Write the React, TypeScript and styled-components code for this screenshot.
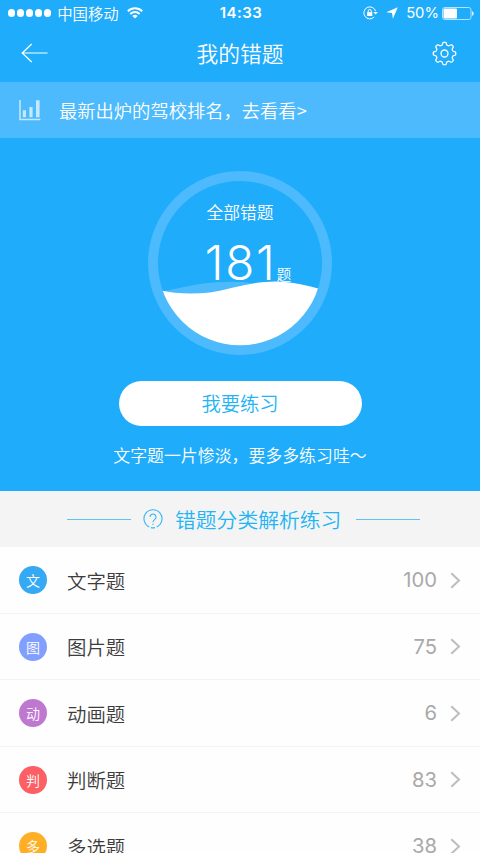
import React from 'react';
import styled, { createGlobalStyle } from 'styled-components';

const Global = createGlobalStyle`
  * { box-sizing: border-box; }
  html, body { margin: 0; padding: 0; height: 853px; overflow: hidden; background: #fff; }
  svg { display: block; flex: none; }
`;

const cjk = `'Noto Sans CJK SC', sans-serif`;
const latin = `Inter, 'Noto Sans CJK SC', sans-serif`;

const Screen = styled.div`
  width: 480px;
  height: 853px;
  overflow: hidden;
  background: #fefefe;
  font-family: ${cjk};
  font-weight: 350;
  display: flex;
  flex-direction: column;
  white-space: nowrap;
`;

const Hero = styled.div`
  flex: none;
  height: 491px;
  background: #1facfb;
  color: #fff;
  display: flex;
  flex-direction: column;
`;

const StatusBar = styled.div`
  height: 26px;
  padding: 0 6px 0 8px;
  display: grid;
  grid-template-columns: 1fr auto 1fr;
  align-items: center;
`;

const StatusSide = styled.div<{ $end?: boolean }>`
  display: flex;
  align-items: center;
  justify-content: ${(p) => (p.$end ? 'flex-end' : 'flex-start')};
`;

const Dots = styled.div`
  display: flex;
  gap: 1.8px;
`;

const Dot = styled.i`
  width: 7.2px;
  height: 7.2px;
  border-radius: 50%;
  background: #fff;
`;

const Carrier = styled.span`
  font-size: 15.4px;
  line-height: 26px;
  margin: 0 8px 0 6px;
`;

const Clock = styled.span`
  font: 600 15px/26px ${latin};
  letter-spacing: 0.5px;
`;

const Percent = styled.span`
  font: 400 14.8px/26px ${latin};
  margin: 0 3px 0 8px;
`;

const Spacer = styled.i`
  width: 8px;
`;

const NavBar = styled.div`
  height: 56px;
  padding: 0 23px 2px 21px;
  display: flex;
  align-items: center;
  justify-content: space-between;
`;

const NavTitle = styled.h1`
  margin: 0;
  font-size: 21.8px;
  font-weight: 350;
  line-height: 54px;
`;

const Banner = styled.div`
  height: 56px;
  padding-left: 19px;
  background: #4cbafc;
  display: flex;
  align-items: center;
  gap: 18px;
  font-size: 18.3px;
`;

const Gauge = styled.div`
  width: 184px;
  height: 184px;
  margin: 33.4px auto 0;
  display: grid;
  > * { grid-area: 1 / 1; }
`;

const GaugeText = styled.div`
  z-index: 1;
  display: flex;
  flex-direction: column;
  align-items: center;
`;

const GaugeLabel = styled.div`
  margin-top: 28.6px;
  font-size: 16.8px;
  line-height: 24px;
`;

const GaugeValue = styled.div`
  display: flex;
  align-items: baseline;
  margin: 11px 0 0 16px;
  font: 350 47.5px/56px ${latin};
  letter-spacing: 1.8px;
`;

const Unit = styled.span`
  font: 350 14.8px/20px ${cjk};
  letter-spacing: 0;
  margin-left: 0;
`;

const PracticeButton = styled.button`
  width: 243px;
  height: 45px;
  margin: 25.6px auto 0;
  padding: 0;
  border: 0;
  border-radius: 23px;
  background: #fff;
  color: #22b4f5;
  font: 350 19.3px/45px ${cjk};
`;

const Hint = styled.div`
  margin-top: 17px;
  text-align: center;
  font-size: 16.9px;
  line-height: 24px;
`;

const SectionHead = styled.div`
  flex: none;
  height: 56px;
  background: #f4f4f4;
  color: #22b4f5;
  display: flex;
  align-items: center;
  padding-left: 66.5px;
  font-size: 20.8px;
`;

const Rule = styled.i`
  width: 64px;
  height: 1px;
  background: #5cc3f2;
`;

const HelpSlot = styled.span`
  margin-left: 12.5px;
`;

const SectionTitle = styled.span`
  margin: 0 15px 0 12px;
  line-height: 54px;
  padding-bottom: 1px;
`;

const Row = styled.div`
  flex: none;
  height: 66.5px;
  padding: 1px 19px 0;
  border-bottom: 1px solid #f3f3f3;
  display: flex;
  align-items: center;
`;

const Badge = styled.span<{ $color: string }>`
  width: 28px;
  height: 28px;
  border-radius: 50%;
  background: ${(p) => p.$color};
  color: #fff;
  font-size: 14px;
  line-height: 28px;
  text-align: center;
`;

const RowLabel = styled.span`
  flex: 1;
  margin-left: 20px;
  color: #3c3c3c;
  font-size: 19.4px;
`;

const Count = styled.span`
  margin-right: 13px;
  color: #a9a9a9;
  font: 370 20.2px/28px ${latin};
`;

const rows = [
  { mark: '文', label: '文字题', count: 100, color: '#36a9f5' },
  { mark: '图', label: '图片题', count: 75, color: '#829fff' },
  { mark: '动', label: '动画题', count: 6, color: '#bf78d0' },
  { mark: '判', label: '判断题', count: 83, color: '#fc6064' },
  { mark: '多', label: '多选题', count: 38, color: '#ffaf26' },
];

const gearPath = (() => {
  const c = 12.5;
  const steps = 160;
  const points: string[] = [];
  for (let i = 0; i < steps; i++) {
    const a = (i / steps) * Math.PI * 2;
    const r = 9.95 + 1.3 * Math.tanh(2.4 * Math.cos(8 * a));
    points.push(`${(c + r * Math.cos(a)).toFixed(2)} ${(c + r * Math.sin(a)).toFixed(2)}`);
  }
  return `M${points.join('L')}Z`;
})();

const Wifi = () => (
  <svg width="16" height="12" viewBox="0 0 16 12" fill="none" stroke="#fff" strokeWidth="1.9">
    <path d="M.8 4.2a10.3 10.3 0 0 1 14.4 0" />
    <path d="M3.3 7a6.7 6.7 0 0 1 9.4 0" />
    <path d="M8 11.6 5.4 9a3.7 3.7 0 0 1 5.2 0Z" fill="#fff" stroke="none" />
  </svg>
);

const RotationLock = () => (
  <svg width="15" height="14" viewBox="0 0 15 14" fill="none" stroke="#fff" strokeWidth="1">
    <path d="M12.6 5.2A6 6 0 1 0 11.2 11" />
    <path d="M10.4 6h4.4l-2.2 2.6Z" fill="#fff" stroke="none" />
    <rect x="4.1" y="6.2" width="5.2" height="3.8" fill="#fff" stroke="none" />
    <path d="M5.2 6.4V5a1.5 1.5 0 0 1 3 0v1.4" />
  </svg>
);

const Location = () => (
  <svg width="12" height="12" viewBox="0 0 12 12" fill="#fff">
    <path d="M11.8.2 6.9 11.8 6 6 .2 5.2Z" />
  </svg>
);

const Battery = () => (
  <svg width="32" height="13" viewBox="0 0 32 13">
    <rect x=".5" y=".5" width="28.5" height="12" rx="2.2" fill="none" stroke="#b5e2fd" />
    <rect x="1.5" y="1.5" width="13.5" height="10" rx="1" fill="#fff" />
    <path d="M30 4.2c2.4.6 2.4 4 0 4.6Z" fill="#d5effd" />
  </svg>
);

const BackArrow = () => (
  <svg width="27" height="20" viewBox="0 0 27 20" fill="none" stroke="#fff" strokeWidth="1.2">
    <path d="M10.7 1 1.2 10l9.5 9M1.2 10H26.5" />
  </svg>
);

const Gear = () => (
  <svg width="25" height="25" viewBox="0 0 25 25" fill="none" stroke="#fff" strokeWidth="1.3">
    <path d={gearPath} />
    <circle cx="12.5" cy="12.5" r="3.5" />
  </svg>
);

const Bars = () => (
  <svg width="22" height="21" viewBox="0 0 22 21" fill="#c4e8fe">
    <path d="M.2 0h1.6v18.8h19.6v1.5H.2Z" />
    <path d="M3.8 10.3h3.2v7H3.8ZM10.4 7h3.2v10.3h-3.2ZM17 .3h3.6v17H17Z" />
  </svg>
);

const Waves = () => (
  <svg width="184" height="184" viewBox="0 0 184 184">
    <defs>
      <clipPath id="inner"><circle cx="92" cy="92.3" r="82" /></clipPath>
    </defs>
    <circle cx="92" cy="92" r="87" fill="none" stroke="#4cbafc" strokeWidth="10" />
    <g clipPath="url(#inner)">
      <path d="M10 121C35 117 52 111 78 111C100 110 120 115 140 120V184H10Z" fill="#4cbafc" />
      <path d="M10 119C28 123 46 123 62 121.500C82 118.500 103 110.500 127 110.500C145 110.500 160 115 176 119V184H10Z" fill="#fff" />
    </g>
  </svg>
);

const Help = () => (
  <svg width="20" height="20" viewBox="0 0 20 20" fill="none" stroke="#35b7f1" strokeWidth="1.1">
    <path d="M6.3 17.9A9 9 0 1 1 13.7 17.9M8 18.6A9 9 0 0 0 12 18.6" />
    <path d="M7 8a3 3 0 1 1 5 2.2C10.8 11.2 10 11.8 10 13.2M10 14.7v1.2" />
  </svg>
);

const Chevron = () => (
  <svg width="11" height="17" viewBox="0 0 11 17" fill="none" stroke="#bdbdc1" strokeWidth="2">
    <path d="M1.3 1.3 9 8.5l-7.7 7.2" />
  </svg>
);

export default function App() {
  return (
    <>
      <Global />
      <Screen>
        <Hero>
          <StatusBar>
            <StatusSide>
              <Dots>{[0, 1, 2, 3, 4].map((i) => <Dot key={i} />)}</Dots>
              <Carrier>中国移动</Carrier>
              <Wifi />
            </StatusSide>
            <Clock>14:33</Clock>
            <StatusSide $end>
              <RotationLock />
              <Spacer />
              <Location />
              <Percent>50%</Percent>
              <Battery />
            </StatusSide>
          </StatusBar>
          <NavBar>
            <BackArrow />
            <NavTitle>我的错题</NavTitle>
            <Gear />
          </NavBar>
          <Banner>
            <Bars />
            <span>最新出炉的驾校排名，去看看&gt;</span>
          </Banner>
          <Gauge>
            <Waves />
            <GaugeText>
              <GaugeLabel>全部错题</GaugeLabel>
              <GaugeValue>181<Unit>题</Unit></GaugeValue>
            </GaugeText>
          </Gauge>
          <PracticeButton>我要练习</PracticeButton>
          <Hint>文字题一片惨淡，要多多练习哇～</Hint>
        </Hero>
        <SectionHead>
          <Rule />
          <HelpSlot><Help /></HelpSlot>
          <SectionTitle>错题分类解析练习</SectionTitle>
          <Rule />
        </SectionHead>
        {rows.map((r) => (
          <Row key={r.label}>
            <Badge $color={r.color}>{r.mark}</Badge>
            <RowLabel>{r.label}</RowLabel>
            <Count>{r.count}</Count>
            <Chevron />
          </Row>
        ))}
      </Screen>
    </>
  );
}
